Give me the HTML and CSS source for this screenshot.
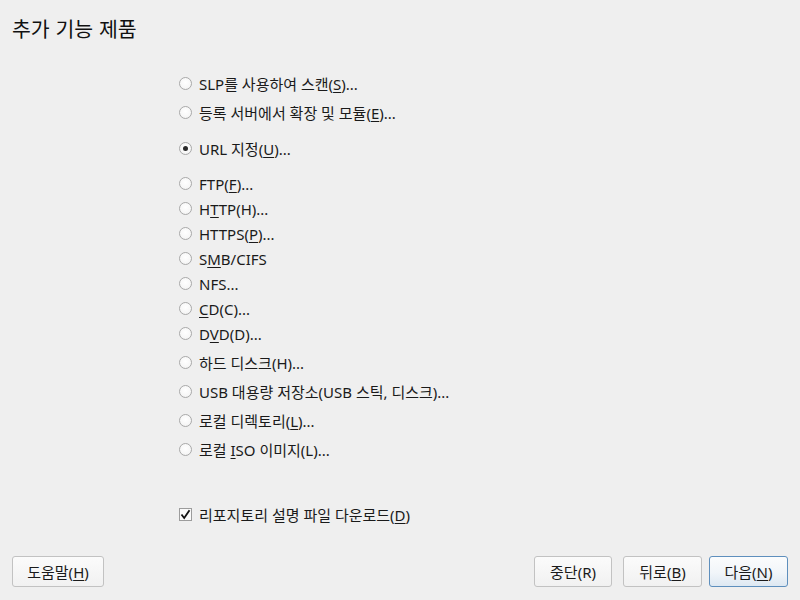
FILE: index.html
```html
<!DOCTYPE html>
<html lang="ko">
<head>
<meta charset="utf-8">
<link rel="stylesheet" href="styles.css">
</head>
<body>
<div class="page">
  <h1 class="title">추가 기능 제품</h1>
  <div class="options">
    <div class="group">
      <label class="row tall"><span class="radio"></span><span>SLP를 사용하여 스캔(<u>S</u>)...</span></label>
      <label class="row tall"><span class="radio"></span><span>등록 서버에서 확장 및 모듈(<u>E</u>)...</span></label>
    </div>
    <div class="group url">
      <label class="row tall"><span class="radio checked"></span><span>URL 지정(<u>U</u>)...</span></label>
    </div>
    <div class="group sub">
      <label class="row"><span class="radio"></span><span>FTP(<u>F</u>)...</span></label>
      <label class="row"><span class="radio"></span><span>H<u>T</u>TP(H)...</span></label>
      <label class="row"><span class="radio"></span><span>HTTPS(<u>P</u>)...</span></label>
      <label class="row"><span class="radio"></span><span>S<u>M</u>B/CIFS</span></label>
      <label class="row"><span class="radio"></span><span>NFS...</span></label>
      <label class="row"><span class="radio"></span><span><u>C</u>D(C)...</span></label>
      <label class="row"><span class="radio"></span><span>D<u>V</u>D(D)...</span></label>
      <label class="row tall first-tall"><span class="radio"></span><span>하드 디스크(H)...</span></label>
      <label class="row tall"><span class="radio"></span><span>USB 대용량 저장소(USB 스틱, 디스크)...</span></label>
      <label class="row tall"><span class="radio"></span><span>로컬 디렉토리(<u>L</u>)...</span></label>
      <label class="row tall"><span class="radio"></span><span>로컬 <u>I</u>SO 이미지(L)...</span></label>
    </div>
  </div>
  <div class="spacer"></div>
  <label class="row tall check-row"><span class="checkbox"><svg width="11" height="11" viewBox="0 0 11 11"><path d="M1.5 5.5 L4.2 9 L9.5 1.2" fill="none" stroke="#111" stroke-width="1.8"/></svg></span><span>리포지토리 설명 파일 다운로드(<u>D</u>)</span></label>
  <div class="footer">
    <button class="btn help">도움말(<u>H</u>)</button>
    <div class="right">
      <button class="btn abort">중단(R)</button>
      <button class="btn back">뒤로(<u>B</u>)</button>
      <button class="btn next default">다음(<u>N</u>)</button>
    </div>
  </div>
</div>
</body>
</html>
```

FILE: styles.css
```css
html, body {
  margin: 0;
  padding: 0;
  background: #efefef;
}
body {
  font-family: "Noto Sans", "Noto Sans CJK KR", sans-serif;
  font-size: 15px;
  color: #1a1a1a;
}
.page {
  width: 800px;
  height: 600px;
  display: flex;
  flex-direction: column;
  box-sizing: border-box;
}
.title {
  margin: 0;
  padding: 14px 0 0 12px;
  height: 30px;
  font-size: 20.5px;
  font-weight: normal;
  line-height: 28px;
  font-family: "Noto Sans CJK KR", sans-serif;
  color: #111;
}
.options {
  padding: 25px 0 0 179px;
  display: flex;
  flex-direction: column;
}
.group {
  display: flex;
  flex-direction: column;
}
.group.url {
  margin-top: 7px;
}
.group.sub {
  margin-top: 8px;
}
.row {
  display: flex;
  align-items: center;
  height: 25px;
  gap: 7px;
  white-space: nowrap;
}
.row.tall {
  height: 29px;
}
.row.first-tall {
  margin-top: 2px;
}
.radio {
  width: 11px;
  height: 11px;
  border: 1px solid #a9a9a9;
  border-radius: 50%;
  background: radial-gradient(circle at 50% 40%, #ffffff 0%, #f7f7f7 60%, #ececec 100%);
  position: relative;
  flex: none;
}
.radio.checked::after {
  content: "";
  position: absolute;
  left: 3px;
  top: 3px;
  width: 5px;
  height: 5px;
  border-radius: 50%;
  background: #2a2a2a;
}
.spacer {
  flex: 1;
}
.check-row {
  padding-left: 179px;
  margin-bottom: 27px;
}
.checkbox {
  width: 11px;
  height: 11px;
  border: 1px solid #9c9c9c;
  background: #fafafa;
  display: flex;
  align-items: center;
  justify-content: center;
  flex: none;
}
.footer {
  display: flex;
  justify-content: space-between;
  align-items: center;
  padding: 0 12px 13px 12px;
}
.right {
  display: flex;
  gap: 11px;
}
.right .next {
  margin-left: -4px;
}
.btn {
  font-family: "Noto Sans", "Noto Sans CJK KR", sans-serif;
  font-size: 15px;
  color: #1a1a1a;
  height: 31px;
  padding: 0;
  border: 1px solid #c2c2c2;
  border-radius: 3px;
  background: linear-gradient(#fbfbfb, #f1f1f1);
  box-sizing: border-box;
}
.help {
  width: 92px;
}
.abort {
  width: 78px;
}
.back {
  width: 79px;
}
.next {
  width: 79px;
}
.btn.default {
  border-color: #5e8fbd;
  background: linear-gradient(#fbfcfd 0%, #f1f5f9 55%, #dde8f2 100%);
}
u {
  text-decoration: underline;
  text-underline-offset: 2px;
}
```
